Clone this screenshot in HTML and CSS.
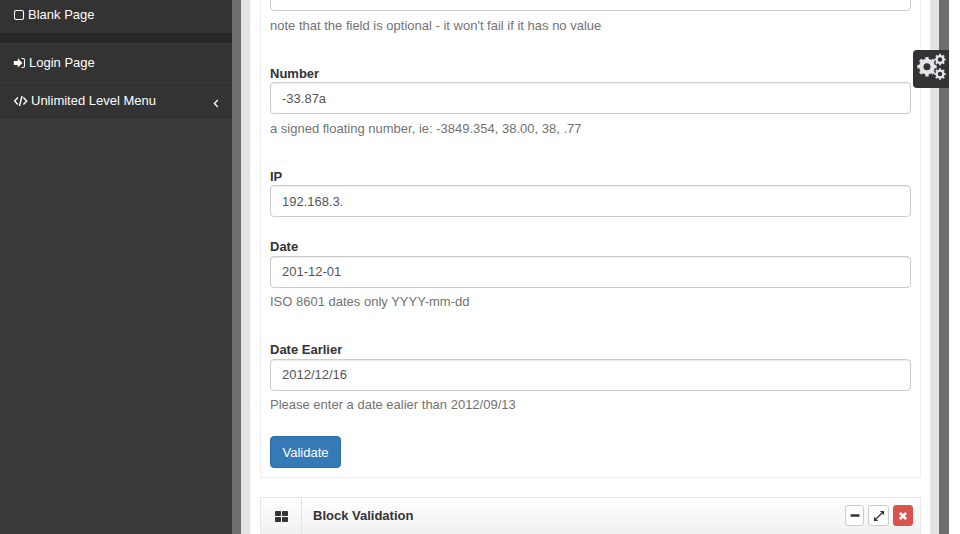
FILE: index.html
```
<!DOCTYPE html>
<html lang="en">
<head>
<meta charset="utf-8">
<title>Form Validation</title>
<link rel="stylesheet" href="styles.css">
</head>
<body>
<div class="app">
  <nav class="sidebar">
    <a class="item blank"><svg width="12" height="12" viewBox="0 0 12 12"><rect x="1.5" y="1.5" width="9" height="9" rx="1.6" fill="none" stroke="#fff" stroke-width="1.1"/></svg><span>Blank Page</span></a>
    <div class="divider"></div>
    <a class="item login"><svg width="13" height="12" viewBox="0 0 13 12"><path d="M.8 3.900h4V1.200L9.500 5.900 4.800 10.600V7.900h-4z" fill="#fff"/><path d="M8.500 1.500h1.500q1.500 0 1.500 1.500v6q0 1.500-1.500 1.500H8.500" fill="none" stroke="#fff" stroke-width="1.100"/></svg><span>Login Page</span></a>
    <a class="item levels"><svg width="15" height="12" viewBox="0 0 15 12" fill="none" stroke="#fff" stroke-width="1.4"><path d="M4.900 2.600 1.600 6l3.300 3.400M10.400 2.600 13.700 6 10.400 9.400M9 1 6.500 11"/></svg><span>Unlimited Level Menu</span><svg class="arrow" width="6" height="9" viewBox="0 0 6 9"><path d="M4.800 1 1.400 4.500 4.800 8" fill="none" stroke="#fff" stroke-width="1.3"/></svg></a>
  </nav>
  <main class="frame">
    <div class="content">
      <section class="form-box">
        <div class="group first"><div class="input"></div><p class="help">note that the field is optional - it won't fail if it has no value</p></div>
        <div class="group number"><label>Number</label><div class="input">-33.87a</div><p class="help">a signed floating number, ie: -3849.354, 38.00, 38, .77</p></div>
        <div class="group short"><label>IP</label><div class="input">192.168.3.</div></div>
        <div class="group"><label>Date</label><div class="input">201-12-01</div><p class="help">ISO 8601 dates only YYYY-mm-dd</p></div>
        <div class="group last"><label>Date Earlier</label><div class="input">2012/12/16</div><p class="help">Please enter a date ealier than 2012/09/13</p></div>
        <button class="validate">Validate</button>
      </section>
      <header class="block">
        <div class="block-icon"><svg width="13" height="11" viewBox="0 0 13 11" fill="#333"><rect x="0" y="0" width="6" height="5" rx=".8"/><rect x="7" y="0" width="6" height="5" rx=".8"/><rect x="0" y="6" width="6" height="5" rx=".8"/><rect x="7" y="6" width="6" height="5" rx=".8"/></svg></div>
        <h5>Block Validation</h5>
        <div class="tools">
          <span class="tool minus"><svg width="10" height="10" viewBox="0 0 10 10"><rect x=".5" y="3.300" width="9" height="2.500" rx=".6" fill="#333"/></svg></span>
          <span class="tool expand"><svg width="10" height="10" viewBox="0 0 10 10" fill="#333"><path d="M5.800 0H10v4.200zM0 5.800V10h4.200z"/><path d="M2 8l6-6" stroke="#333" stroke-width="1.300"/></svg></span>
          <span class="tool close"><svg width="10" height="10" viewBox="0 0 10 10"><path d="M1.900 1.900l6.200 6.200M8.100 1.900 1.900 8.100" stroke="#fff" stroke-width="2.700"/></svg></span>
        </div>
      </header>
    </div>
  </main>
  <div class="settings"><svg width="31" height="28" viewBox="0 0 31 28" fill="none" stroke="#e4e4ea">
    <circle cx="11" cy="13.700" r="5.700" stroke-width="4.400"/><circle cx="11" cy="13.700" r="8.400" stroke-width="2.600" pathLength="16" stroke-dasharray="1 1" stroke-dashoffset=".5"/>
    <circle cx="24" cy="6.500" r="3.400" stroke-width="2.300"/><circle cx="24" cy="6.500" r="4.900" stroke-width="1.700" pathLength="16" stroke-dasharray="1 1" stroke-dashoffset=".5"/>
    <circle cx="24" cy="21" r="3.400" stroke-width="2.300"/><circle cx="24" cy="21" r="4.900" stroke-width="1.700" pathLength="16" stroke-dasharray="1 1" stroke-dashoffset=".5"/>
  </svg></div>
</div>
</body>
</html>
```
FILE: styles.css
```
* { box-sizing: border-box; }
body { margin: 0; background: #fff; font: 13px/18px "Liberation Sans", Arial, sans-serif; color: #333; overflow: hidden; }
p, h5 { margin: 0; }
svg { display: block; flex: none; }
.app { position: relative; display: flex; width: 949px; height: 534px; overflow: hidden; background: #6e6e6e; }
.sidebar { width: 232px; background: #3a3a3a; }
.item { display: flex; align-items: center; gap: 3px; padding-left: 13px; background: #333; color: #fff; }
.blank { height: 33px; padding-bottom: 3px; }
.divider { height: 10px; background: #282828; }
.login { height: 39px; border-top: 1px solid #3a3a3a; }
.levels { height: 37px; border-top: 1px solid #3a3a3a; }
.arrow { margin: 4px 13px 0 auto; }
.frame { width: 698px; margin-left: 9px; padding: 0 9px; background: #e3e3e3; }
.content { width: 680px; height: 534px; padding: 0 9px 0 10px; background: #fff; overflow: hidden; }
.form-box { height: 478px; padding: 0 9px; border: 1px solid #eee; border-top: 0; overflow: hidden; }
.group { height: 103px; }
.first { height: 85px; margin-top: -21px; }
.short { height: 71px; }
.last { height: 95px; }
label { display: block; height: 18px; font-weight: 700; }
.number label, .short label { line-height: 20px; }
.input { height: 32px; padding: 6px 11px; border: 1px solid #ccc; border-radius: 4px; background: #fff; color: #555; box-shadow: inset 0 1px 1px rgba(0,0,0,.075); }
.number .input, .short .input { padding-top: 7px; }
.help { margin-top: 5px; color: #737373; }
.first .help, .number .help { margin-top: 6px; }
.validate { display: block; width: 71px; height: 32px; padding: 1px 0 0; border: 1px solid #2e6da4; border-radius: 4px; background: #337ab7; color: #fff; font: inherit; }
.block { display: flex; height: 38px; margin-top: 19px; border: 1px solid #e7e7e7; border-bottom: 0; background: linear-gradient(#fff, #f0f0f0); }
.block-icon { width: 41px; padding: 13px 0 0 14px; border-right: 1px solid #e2e2e2; }
h5 { padding: 9px 0 0 11px; font-size: 13px; line-height: 18px; }
.tools { display: flex; gap: 4px; margin: 7px 7px 0 auto; }
.tool { display: flex; align-items: center; justify-content: center; width: 20px; height: 21px; border: 1px solid #ccc; border-radius: 3px; background: #fff; }
.minus { width: 19px; }
.expand { width: 21px; }
.close { background: #d9534f; border-color: #d9534f; }
.settings { position: absolute; top: 50px; right: 0; width: 36px; height: 38px; padding: 3px 0 0 3px; border-radius: 4px 0 0 4px; background: #333; }
```
